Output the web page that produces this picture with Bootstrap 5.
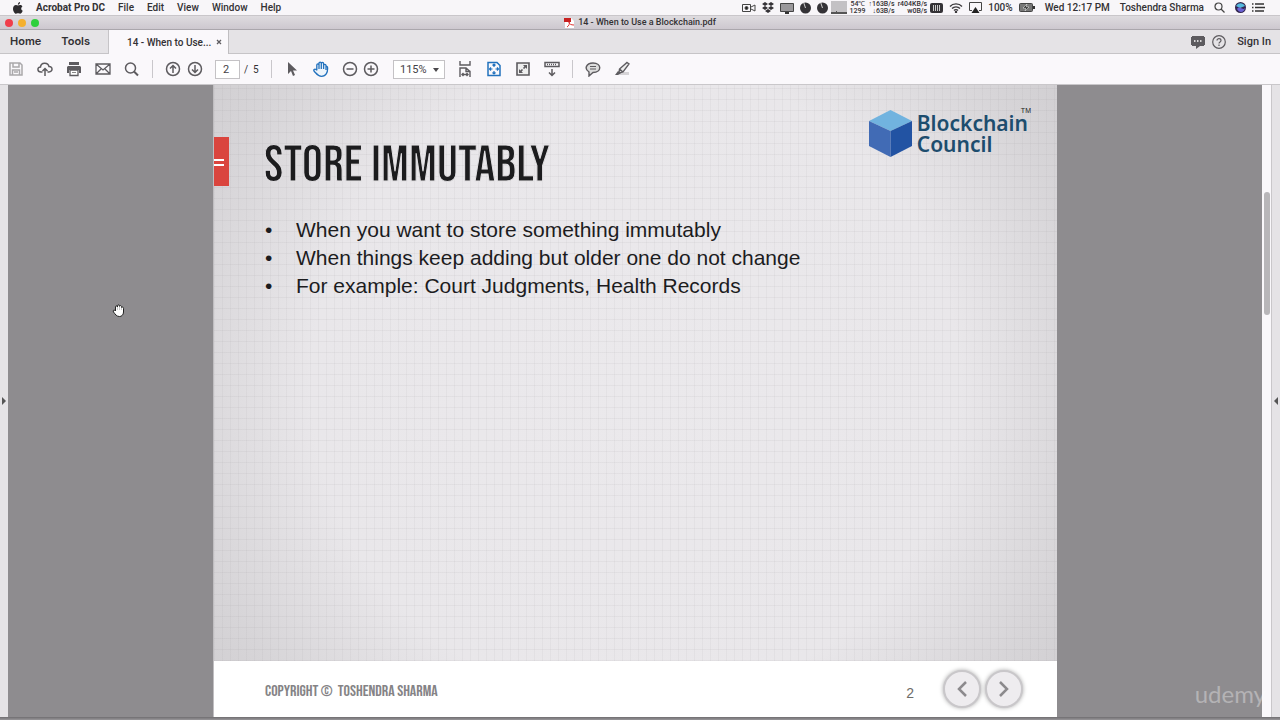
<!DOCTYPE html>
<html lang="en">
<head>
<meta charset="utf-8">
<meta name="viewport" content="width=device-width, initial-scale=1">
<title>14 - When to Use a Blockchain.pdf</title>
<link href="https://cdn.jsdelivr.net/npm/bootstrap@5.3.0/dist/css/bootstrap.min.css" rel="stylesheet">
<style>
  body { font-family: Roboto, "Liberation Sans", sans-serif; font-size: 10px; line-height: 15px; color: #333134; background: #8e8c8f; }
  a { color: inherit; text-decoration: none; }
  svg { display: block; flex: none; }
  button { border: 0; padding: 0; background: none; color: #5d5b5f; flex: none; }
  .menubar { height: 15px; background: #f8f6f9; font-weight: 500; }
  .menubar a, .menubar span { white-space: nowrap; }
  .menus { gap: 13px; margin-left: 13px; }
  .status { gap: 6px; padding-right: 14px; }
  .stats { gap: 3px; }
  .status .meter { font-size: 7px; line-height: 7px; text-align: right; font-weight: 500; }
  .titlebar { height: 15px; background: linear-gradient(#dedbdf, #cdc8cf); border-top: 1px solid #c9c6ca; border-bottom: 1px solid #aaa6ac; font-size: 9px; font-weight: 500; line-height: 13px; }
  .lights { position: absolute; left: 5px; top: 3px; gap: 5px; }
  .dot { width: 8px; height: 8px; border-radius: 50%; }
  .red { background: #f03e4b; } .amber { background: #f5b02f; } .green { background: #2fd03c; }
  .tabs { height: 24px; background: #e5e3e6; }
  .tabs .home { font: 600 11px/15px Inter, sans-serif; padding-left: 10px; gap: 20px; width: 109px; border-right: 1px solid #c6c4c7; border-bottom: 1px solid #c6c4c7; }
  .doc-tab { width: 120px; background: #faf8fb; white-space: nowrap; font-weight: 500; border-right: 1px solid #c0bec1; padding: 0 6px 0 18px; }
  .account { border-bottom: 1px solid #c6c4c7; gap: 7px; padding-right: 9px; font-size: 11px; font-weight: 500; }
  .tools { height: 31px; background: #faf8fb; border-bottom: 1px solid #c9c7ca; padding-left: 8px; }
  .group { gap: 13px; }
  .pair { gap: 6px; }
  .rule { width: 1px; height: 18px; background: #c9c7cb; margin: 0 12px; }
  .field { height: 19px; border: 1px solid #c4c2c5; border-radius: 0; background: #fff; font-size: 11px; line-height: 15px; color: #444246; }
  .page-no { width: 25px; padding: 0 7px; margin: 0 4px 0 12px; }
  .total { width: 15px; white-space: nowrap; }
  .zoom-box { width: 52px; margin: 0 12px 0 13px; }
  .zoom-box select { width: 100%; padding: 0 6px; appearance: none; }
  .caret { position: absolute; right: 6px; top: 8px; border: 3px solid transparent; border-top: 4px solid #4a484b; border-bottom: 0; pointer-events: none; }
  .blue { color: #2271bd; }
  .rail { width: 8px; background: #e5e3e6; color: #555; }
  .viewer { background: #8e8c8f; }
  .sheet { width: 67.3%; background: #fff; border-left: 1px solid #c0bec1; }
  .slide { background:
      repeating-linear-gradient(0deg, #8a868a16 0 1px, transparent 1px 11px),
      repeating-linear-gradient(90deg, #8a868a12 0 1px, transparent 1px 8px),
      radial-gradient(ellipse 62% 90% at 50% 52%, #ebe9ec 0, #e9e7ea 62%, #d7d5d8 88%, #c8c6c9 118%); font-family: "Liberation Sans", Arial, sans-serif; color: #1c1c1e; }
  .marker { width: 15px; height: 49px; background: #da453e; margin-top: 52px; padding-top: 22px; }
  .marker i { display: block; width: 10px; height: 2px; background: #fff; margin-bottom: 3px; }
  h1 { font: 400 52px/50px "Bebas Neue", "Liberation Sans Narrow", "Liberation Sans", sans-serif; margin: 56px 0 0 35px; color: #1c1c1e; -webkit-text-stroke: 1px #e2e0e3; }
  .logo { margin: 24px 29px 0 0; gap: 4px; font: 600 21px/21px "Noto Sans", sans-serif; color: #1d4d6e; }
  .tm { font: 7px/8px "Liberation Sans", sans-serif; position: absolute; right: -3px; top: -2px; color: #222; }
  .points { font-size: 21px; line-height: 28px; margin: 25px 0 0; padding: 0 0 0 51px; list-style: none; }
  .points li { display: flex; }
  .points li::before { content: "•"; width: 31px; flex: none; }
  .foot { height: 56px; padding: 0 34px 0 51px; }
  .copy { font: 16px/20px "Bebas Neue", "Liberation Sans Narrow", sans-serif; color: #858386; padding-top: 6px; }
  .num { font: 14px/20px "Liberation Sans", sans-serif; color: #6d6d68; margin: 7px 25px 0 0; }
  .nav-round { width: 38px; height: 38px; border-radius: 50%; background: #eeecef; border: 2px solid #c9c7ca; box-shadow: 0 0 4px #aaa; color: #8c8a8d; margin-left: 4px; }
  .scroll { width: 10px; background: #faf8fb; border-right: 1px solid #c9c7ca; padding: 107px 1px 0 2px; }
  .thumb { width: 6px; height: 123px; border-radius: 3px; background: #b8b6b9; }
  .edge { height: 3px; background: linear-gradient(#6f6d70, #99979a); }
  .watermark { position: absolute; right: 14px; bottom: 9px; font: 24px/34px Lato, sans-serif; color: #ffffff59; }
  .pointer { position: absolute; left: 112px; top: 304px; }
</style>
</head>
<body>
<div class="d-flex flex-column vh-100 overflow-hidden position-relative">

  <nav class="menubar d-flex align-items-center" aria-label="Menu bar">
    <div class="menus d-flex align-items-center">
      <svg width="10" height="12" viewBox="0 0 10 12" fill="#2d2b2e"><path d="M7 0C5.600.2 4.800 1.300 4.900 2.700 6.200 2.700 7.100 1.500 7 0zM5 3.500C4.300 3.500 3.800 3 3 3 1.400 3 0 4.400 0 6.700 0 9 1.500 11.700 3 11.700c.8 0 1-.4 2-.4s1.200.4 2 .4c1.300 0 2.300-1.600 2.700-2.900C7.800 8 7.700 5.300 9.400 4.400 8.900 3.500 8 3 7.100 3 6.200 3 5.600 3.500 5 3.500z"/></svg>
      <a href="#" class="fw-bold">Acrobat Pro DC</a>
      <a href="#">File</a><a href="#">Edit</a><a href="#">View</a><a href="#">Window</a><a href="#">Help</a>
    </div>
    <div class="status d-flex align-items-center ms-auto">
      <svg width="14" height="10" viewBox="0 0 14 10" fill="none" stroke="#444"><path d="M.5 1.500h8v7h-8zM9 4l4-2v6L9 6"/><circle cx="4.500" cy="5" r="1.500" fill="#222"/></svg>
      <svg width="12" height="12" viewBox="0 0 12 12" fill="#343236"><path d="M3 0 6 2 3 4 0 2zM9 0l3 2-3 2-3-2zM3 4l3 2-3 2-3-2zM9 4l3 2-3 2-3-2zM6 7l3 2-3 2-3-2z"/></svg>
      <svg width="14" height="12" viewBox="0 0 14 12"><path fill="#9a989b" stroke="#444" d="M.5 1.500h13v8H.5z"/><path fill="#333" d="M5 10h4v2H5z"/></svg>
      <svg width="11" height="12" viewBox="0 0 12 12"><circle cx="6" cy="6" r="6" fill="#343236"/><path stroke="#ddd" d="M6 6 4 0"/></svg>
      <div class="stats d-flex align-items-center">
        <svg width="11" height="12" viewBox="0 0 12 12"><circle cx="6" cy="6" r="6" fill="#343236"/><path stroke="#ddd" d="M6 6 4 0"/></svg>
        <svg width="16" height="13" viewBox="0 0 16 13"><path fill="#c3c1c4" d="M0 0h16v13H0z"/><path fill="#555" d="M0 11h5v-1h1v1h10v2H0z"/></svg>
        <span class="meter">54℃<br>1299</span><span class="meter">↑163B/s<br>↓63B/s</span><span class="meter">r404KB/s<br>w0B/s</span>
        <svg width="13" height="10" viewBox="0 0 13 10"><rect width="13" height="10" rx="2" fill="#343236"/><path stroke="#ccc" d="M3.500 2v6M5.500 2v6M7.500 2v6M9.500 2v6"/></svg>
      </div>
      <svg width="14" height="10" viewBox="0 0 14 10" fill="none" stroke="#3b393c" stroke-width="1.300"><path d="M1 3.500C4 0 10 0 13 3.500M3 5.500c2-2.300 6-2.300 8 0M5 7.500c1-1.200 3-1.200 4 0"/><circle cx="7" cy="9" r=".6"/></svg>
      <svg width="13" height="11" viewBox="0 0 13 11"><path fill="none" stroke="#444" d="M3 8.500H.5v-8h12v8H10"/><path fill="#222" d="m6.500 5 4 6h-8z"/></svg>
      <span>100%</span>
      <svg width="16" height="9" viewBox="0 0 16 9"><rect x=".5" y=".5" width="13" height="8" rx="1" fill="#777" stroke="#444"/><path stroke="#333" stroke-width="2" d="M15 3v3"/><path fill="#111" stroke="#fff" stroke-width=".5" d="M8 1 4 5h3L6 8l4-4H7z"/></svg>
      <span class="ms-1">Wed 12:17 PM</span>
      <span class="ms-1">Toshendra Sharma</span>
      <svg class="mx-1" width="11" height="11" viewBox="0 0 11 11" fill="none" stroke="#444" stroke-width="1.200"><circle cx="4.500" cy="4.500" r="3.500"/><path d="m7 7 3.500 3.500"/></svg>
      <svg width="11" height="11" viewBox="0 0 11 11"><circle cx="5.500" cy="5.500" r="5.500" fill="#32264f"/><path fill="#54b9de" d="M1 4c3-4 7-3 9 0L5 6z"/><path fill="#6b62d6" d="M2 7c3-4 5 2 8-1-1 5-6 5-8 1z"/></svg>
      <svg width="14" height="9" viewBox="0 0 14 9" stroke="#333" stroke-width="1.300"><path d="M0 1h1.500M3 1h9M0 4.500h1.500M3 4.500h10M0 8h1.500M3 8h9"/></svg>
    </div>
  </nav>

  <header class="titlebar d-flex justify-content-center align-items-center position-relative">
    <div class="lights d-flex"><span class="dot red"></span><span class="dot amber"></span><span class="dot green"></span></div>
    <svg class="me-1" width="10" height="10" viewBox="0 0 10 10"><path fill="#fff" d="M1 0h6l3 3v7H1z"/><path fill="#c82020" d="M0 0h7v4H0z"/><path fill="none" stroke="#d33" d="M3 9c2-1 3-4 2-5 0 2 2 3 5 3"/></svg>
    <span>14 - When to Use a Blockchain.pdf</span>
  </header>

  <div class="tabs d-flex">
    <div class="home d-flex align-items-center"><a href="#">Home</a><a href="#">Tools</a></div>
    <div class="doc-tab d-flex align-items-center justify-content-between"><span>14 - When to Use...</span>
      <button aria-label="Close tab"><svg width="6" height="6" viewBox="0 0 6 6" stroke="currentColor" stroke-width="1.300"><path d="m1 1 4 4m0-4L1 5"/></svg></button></div>
    <div class="account d-flex align-items-center justify-content-end flex-grow-1">
      <button aria-label="Notifications"><svg width="14" height="14" viewBox="0 0 14 14"><path fill="currentColor" d="M1 1h12v1h1v8h-1v1H9L5 14v-3H1v-1H0V2h1z"/><path stroke="#fff" stroke-width="1.500" stroke-dasharray="1.500 1.500" d="M3 6h8"/></svg></button>
      <button aria-label="Help"><svg width="14" height="14" viewBox="0 0 14 14" fill="none" stroke="currentColor" stroke-width="1.200"><circle cx="7" cy="7" r="6.300"/><path d="M5 5.500C5 3 9 3 9 5.500 9 7 7 6.800 7 8.500M7 9.500V11"/></svg></button>
      <a href="#" class="ms-1">Sign In</a>
    </div>
  </div>

  <div class="tools d-flex align-items-center" role="toolbar" aria-label="Document tools">
    <div class="group d-flex">
      <button aria-label="Save" style="color:#aaa8ab"><svg width="16" height="16" viewBox="0 0 16 16" fill="none" stroke="currentColor" stroke-width="1.500"><path d="M2 2h10l2 2v10H2zM5 2v4h6V2M4.500 14V9h7v5M6 11h4"/></svg></button>
      <button aria-label="Upload"><svg width="16" height="16" viewBox="0 0 16 16" fill="none" stroke="currentColor" stroke-width="1.500"><path d="M5.500 11H4C0 11 0 6 3.500 6 4 1 11 1 12 5.500c4-.3 4 5.500 0 5.500h-1.500M8 15V8M5.500 10 8 7.500 10.500 10"/></svg></button>
      <button aria-label="Print"><svg width="16" height="16" viewBox="0 0 16 16"><path fill="currentColor" d="M3 1h10v3H3zM2 5h12l1 1v6h-2V9H3v3H1V6z"/><path fill="#fff" stroke="currentColor" stroke-width="1.300" d="M4 9h8v5.500H4z"/><path stroke="#888" d="M6 11.500h4"/></svg></button>
      <button aria-label="Email"><svg width="16" height="16" viewBox="0 0 16 16" fill="none" stroke="currentColor" stroke-width="1.300"><path d="M1 3h14v10H1zl7 6 7-6M1 13l5-5m9 5-5-5"/></svg></button>
      <button aria-label="Find"><svg width="16" height="16" viewBox="0 0 16 16" fill="none" stroke="currentColor" stroke-width="1.500"><circle cx="6.500" cy="7" r="5"/><path stroke-width="2" d="m10 10.500 4 4"/></svg></button>
    </div>
    <span class="rule"></span>
    <div class="pair d-flex">
      <button aria-label="Previous page"><svg width="16" height="16" viewBox="0 0 16 16" fill="none" stroke="currentColor" stroke-width="1.500"><circle cx="8" cy="8" r="6.500"/><path d="M8 12V4.500M5 7.500l3-3 3 3"/></svg></button>
      <button aria-label="Next page"><svg width="16" height="16" viewBox="0 0 16 16" fill="none" stroke="currentColor" stroke-width="1.500"><circle cx="8" cy="8" r="6.500"/><path d="M8 4v7.500M5 8.500l3 3 3-3"/></svg></button>
    </div>
    <input class="field page-no" value="2" aria-label="Page number">
    <span class="total">/&nbsp; 5</span>
    <span class="rule"></span>
    <div class="group d-flex">
      <button aria-label="Select"><svg width="16" height="16" viewBox="0 0 16 16"><path fill="currentColor" d="M4 1v12l3-3 2 5 2-1-2-4.500h4z"/></svg></button>
      <button class="blue" aria-label="Hand"><svg width="16" height="16" viewBox="0 0 16 16" fill="#eef5fc" stroke="currentColor" stroke-width="1.300" stroke-linejoin="round"><path d="M3.800 9V4c0-1.500 2.200-1.500 2.200 0V2.300c0-1.500 2.300-1.500 2.300 0v.2c0-1.500 2.300-1.500 2.300 0v2c0-1.500 2.400-1.500 2.400.2L14.500 6c.6 5.500-1.500 9.300-6 9.300-3.500 0-4.500-2-7.300-5C.2 9 1.500 7.500 3 8.500zM6 3.500V8M8.300 2v6M10.600 4v4M13 5v4"/></svg></button>
      <button aria-label="Zoom out"><svg width="16" height="16" viewBox="0 0 16 16" fill="none" stroke="currentColor" stroke-width="1.500"><circle cx="8" cy="8" r="6.500"/><path d="M4.500 8h7"/></svg></button>
    </div>
    <button class="ms-1" aria-label="Zoom in"><svg width="18" height="16" viewBox="0 0 18 16" fill="none" stroke="currentColor" stroke-width="1.500"><circle cx="9" cy="8" r="6.500"/><path d="M5.500 8h7M9 4.500v7"/></svg></button>
    <div class="zoom-box position-relative"><select class="field d-block" aria-label="Zoom level"><option>115%</option></select><span class="caret"></span></div>
    <div class="group d-flex">
      <button aria-label="Scroll pages"><svg width="16" height="16" viewBox="0 0 16 16" fill="none" stroke="currentColor" stroke-width="1.400"><path d="M3 0v4h10V0M3 16V7h6l4 3.500M9 7v3.500h4V16M5 13.500h6M6.500 12 5 13.500 6.500 15M9.500 12l1.500 1.500L9.500 15"/></svg></button>
      <button class="blue" aria-label="Fit page"><svg width="16" height="16" viewBox="0 0 16 16" fill="none" stroke="currentColor" stroke-width="1.500"><path d="M2 1.500h9l3 3v10H2z"/><path stroke-width="1.200" d="M8 3v3M8 10v3M3.500 8h3M9.500 8h3M6.500 4.500 8 3l1.500 1.500m-3 7L8 13l1.500-1.500M5 6.500 3.500 8 5 9.500m6-3L12.500 8 11 9.500"/></svg></button>
      <button aria-label="Full screen"><svg width="16" height="16" viewBox="0 0 16 16"><path fill="#eee" stroke="currentColor" stroke-width="1.600" d="M2 2h12v12H2z"/><path fill="currentColor" d="M8 4h4v4l-1.400-1.400-1.500 1.500-1.200-1.200 1.500-1.500zM4 8v4h4l-1.400-1.400 1.500-1.500-1.200-1.200-1.500 1.500z"/></svg></button>
      <button aria-label="Toolbar options"><svg width="16" height="16" viewBox="0 0 16 16" fill="none" stroke="currentColor" stroke-width="1.500"><path d="M1 1.500h14v4H1zM8 8v6M5 11.500l3 3 3-3"/><path stroke-dasharray="1 1" d="M3 3.500h10"/></svg></button>
    </div>
    <span class="rule"></span>
    <div class="group d-flex">
      <button aria-label="Comment"><svg width="16" height="16" viewBox="0 0 16 16" stroke="currentColor" stroke-width="1.400"><path fill="#ddd" d="M8 2c9 0 9 9.500 0 9.500L4 15v-4C-1 8 1 2 8 2z"/><path stroke-width="1" d="M5 5.500h6M5 8h6"/></svg></button>
      <button aria-label="Highlight"><svg width="16" height="16" viewBox="0 0 16 16"><path fill="#d5d3d6" d="M5 11h10v3H3z"/><path fill="#eee" stroke="currentColor" stroke-width="1.400" d="M13 1.500 15 3 9 11 5 12l.5-4zM5.500 8 9 11"/><path fill="currentColor" d="m4 10 3 2-3 2H1z"/></svg></button>
    </div>
  </div>

  <main class="d-flex flex-grow-1">
    <button class="rail d-flex align-items-center justify-content-center" aria-label="Open navigation pane"><svg width="4" height="8" viewBox="0 0 4 8"><path fill="currentColor" d="M0 0v8l4-4z"/></svg></button>
    <div class="viewer d-flex flex-grow-1 justify-content-center">
      <article class="sheet d-flex flex-column">
        <section class="slide flex-grow-1">
          <div class="d-flex align-items-start">
            <div class="marker"><i></i><i></i></div>
            <h1>STORE IMMUTABLY</h1>
            <div class="logo d-flex ms-auto">
              <svg width="45" height="49" viewBox="0 0 45 49"><path fill="#71b3df" d="M22.500 1 44 12 22.500 22 1 12z"/><path fill="#416bb5" d="m1 12 21.500 10v26L1 37z"/><path fill="#2253a3" d="M44 12 22.500 22v26L44 37z"/></svg>
              <div class="position-relative pt-1">Blockchain<br>Council<span class="tm">TM</span></div>
            </div>
          </div>
          <ul class="points">
            <li>When you want to store something immutably</li>
            <li>When things keep adding but older one do not change</li>
            <li>For example: Court Judgments, Health Records</li>
          </ul>
        </section>
        <footer class="foot d-flex align-items-center">
          <span class="copy">COPYRIGHT ©&nbsp; TOSHENDRA SHARMA</span>
          <span class="num ms-auto">2</span>
          <button class="nav-round d-flex align-items-center justify-content-center" aria-label="Previous slide"><svg width="12" height="16" viewBox="0 0 12 16" fill="none" stroke="currentColor" stroke-width="2.500"><path d="M10 1 3 8l7 7"/></svg></button>
          <button class="nav-round d-flex align-items-center justify-content-center" aria-label="Next slide"><svg width="12" height="16" viewBox="0 0 12 16" fill="none" stroke="currentColor" stroke-width="2.500"><path d="m2 1 7 7-7 7"/></svg></button>
        </footer>
      </article>
    </div>
    <div class="scroll"><div class="thumb"></div></div>
    <button class="rail d-flex align-items-center justify-content-center" aria-label="Open tools pane"><svg width="4" height="8" viewBox="0 0 4 8"><path fill="currentColor" d="M4 0v8L0 4z"/></svg></button>
  </main>
  <div class="edge"></div>
  <svg class="pointer" width="13" height="13" viewBox="0 0 13 13" fill="#fff" stroke="#222" stroke-linejoin="round"><path d="M3.500 7V3c0-1.500 2-1.500 2 0V2c0-1.500 2-1.500 2 0v.5c0-1.300 2-1.300 2 .3V4c0-1.300 2-1.300 2 .3V8c0 3-2 4.500-4 4.500-3 0-4-2-6-4.500-1-1.500.5-2.500 1.500-1.500z"/><path d="M5.500 3v3m2-4v4m2-3v3" stroke="#999" stroke-width=".5"/></svg>
  <span class="watermark">udemy</span>
</div>
<script src="https://cdn.jsdelivr.net/npm/bootstrap@5.3.0/dist/js/bootstrap.bundle.min.js"></script>
</body>
</html>
